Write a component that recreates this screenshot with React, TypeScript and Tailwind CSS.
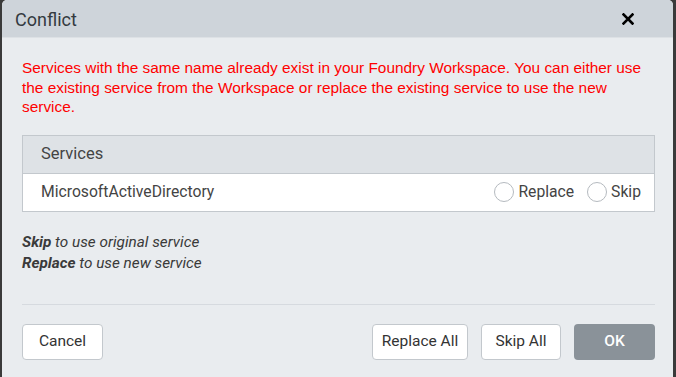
import { useState } from "react";

const roboto = { fontFamily: "Roboto, 'Noto Sans', sans-serif" };

function Radio({ label, checked, onClick }: { label: string; checked: boolean; onClick: () => void }) {
  return (
    <label className="flex cursor-pointer items-center gap-[4px]" onClick={onClick}>
      <span
        className={`h-[20px] w-[20px] rounded-full border bg-white ${
          checked ? "border-[#6c757d]" : "border-[#b5babf]"
        }`}
      />
      <span>{label}</span>
    </label>
  );
}

export default function App() {
  const [choice, setChoice] = useState<"" | "replace" | "skip">("");

  return (
    <div className="h-[377px] w-full overflow-hidden bg-[#3a3a3a] pl-[2px] pr-[3px]" style={roboto}>
      <div className="h-[400px] overflow-hidden rounded-t-[5px] bg-[#e9ecef]">
        {/* header */}
        <div className="flex h-[38px] items-center justify-between border-b border-[#dde1e5] bg-[#ced4da] pl-[13px] pr-[39px]">
          <h2 className="pt-[2px] text-[18px] text-[#343a40]">Conflict</h2>
          <svg width="12" height="12" viewBox="0 0 12 12" className="mt-[1px]">
            <path d="M1.5 1.5 L10.5 10.5 M10.5 1.5 L1.5 10.5" stroke="#000" strokeWidth="2.6" strokeLinecap="square" />
          </svg>
        </div>

        <div className="pl-[20px] pr-[18px]">
          <p
            className="mt-[20px] text-[15.4px] leading-[19.5px] text-[#ff0000]"
            style={{ fontFamily: "'Liberation Sans', Arial, sans-serif" }}
          >
            Services with the same name already exist in your Foundry Workspace. You can either use the existing
            service from the Workspace or replace the existing service to use the new service.
          </p>

          <div className="mt-[18px] border border-[#c3c8cd] text-[15.7px] text-[#444]">
            <div className="flex h-[38px] items-center border-b border-[#c3c8cd] bg-[#dee2e6] pl-[18px] text-[16.5px]">
              Services
            </div>
            <div className="flex h-[37px] items-center justify-between bg-white pl-[18px] pr-[13px]">
              <span>MicrosoftActiveDirectory</span>
              <div className="flex items-center gap-[13px]">
                <Radio label="Replace" checked={choice === "replace"} onClick={() => setChoice("replace")} />
                <Radio label="Skip" checked={choice === "skip"} onClick={() => setChoice("skip")} />
              </div>
            </div>
          </div>

          <div className="mt-[20px] text-[15.3px] italic leading-[21px] text-[#3a3a3a]">
            <div>
              <b>Skip</b> to use original service
            </div>
            <div>
              <b>Replace</b> to use new service
            </div>
          </div>

          <div className="mt-[30px] border-t border-[#d6dadf]" />

          <div className="mt-[19px] flex items-center justify-between text-[15.5px] text-[#333]">
            <button className="h-[36px] w-[81px] rounded-[4px] border border-[#c3c8cd] bg-white">Cancel</button>
            <div className="flex gap-[13px]">
              <button className="h-[36px] w-[96px] rounded-[4px] border border-[#c3c8cd] bg-white">Replace All</button>
              <button className="h-[36px] w-[80px] rounded-[4px] border border-[#c3c8cd] bg-white">Skip All</button>
              <button className="h-[36px] w-[81px] rounded-[4px] bg-[#8a9299] font-medium text-white">OK</button>
            </div>
          </div>
        </div>
      </div>
    </div>
  );
}
